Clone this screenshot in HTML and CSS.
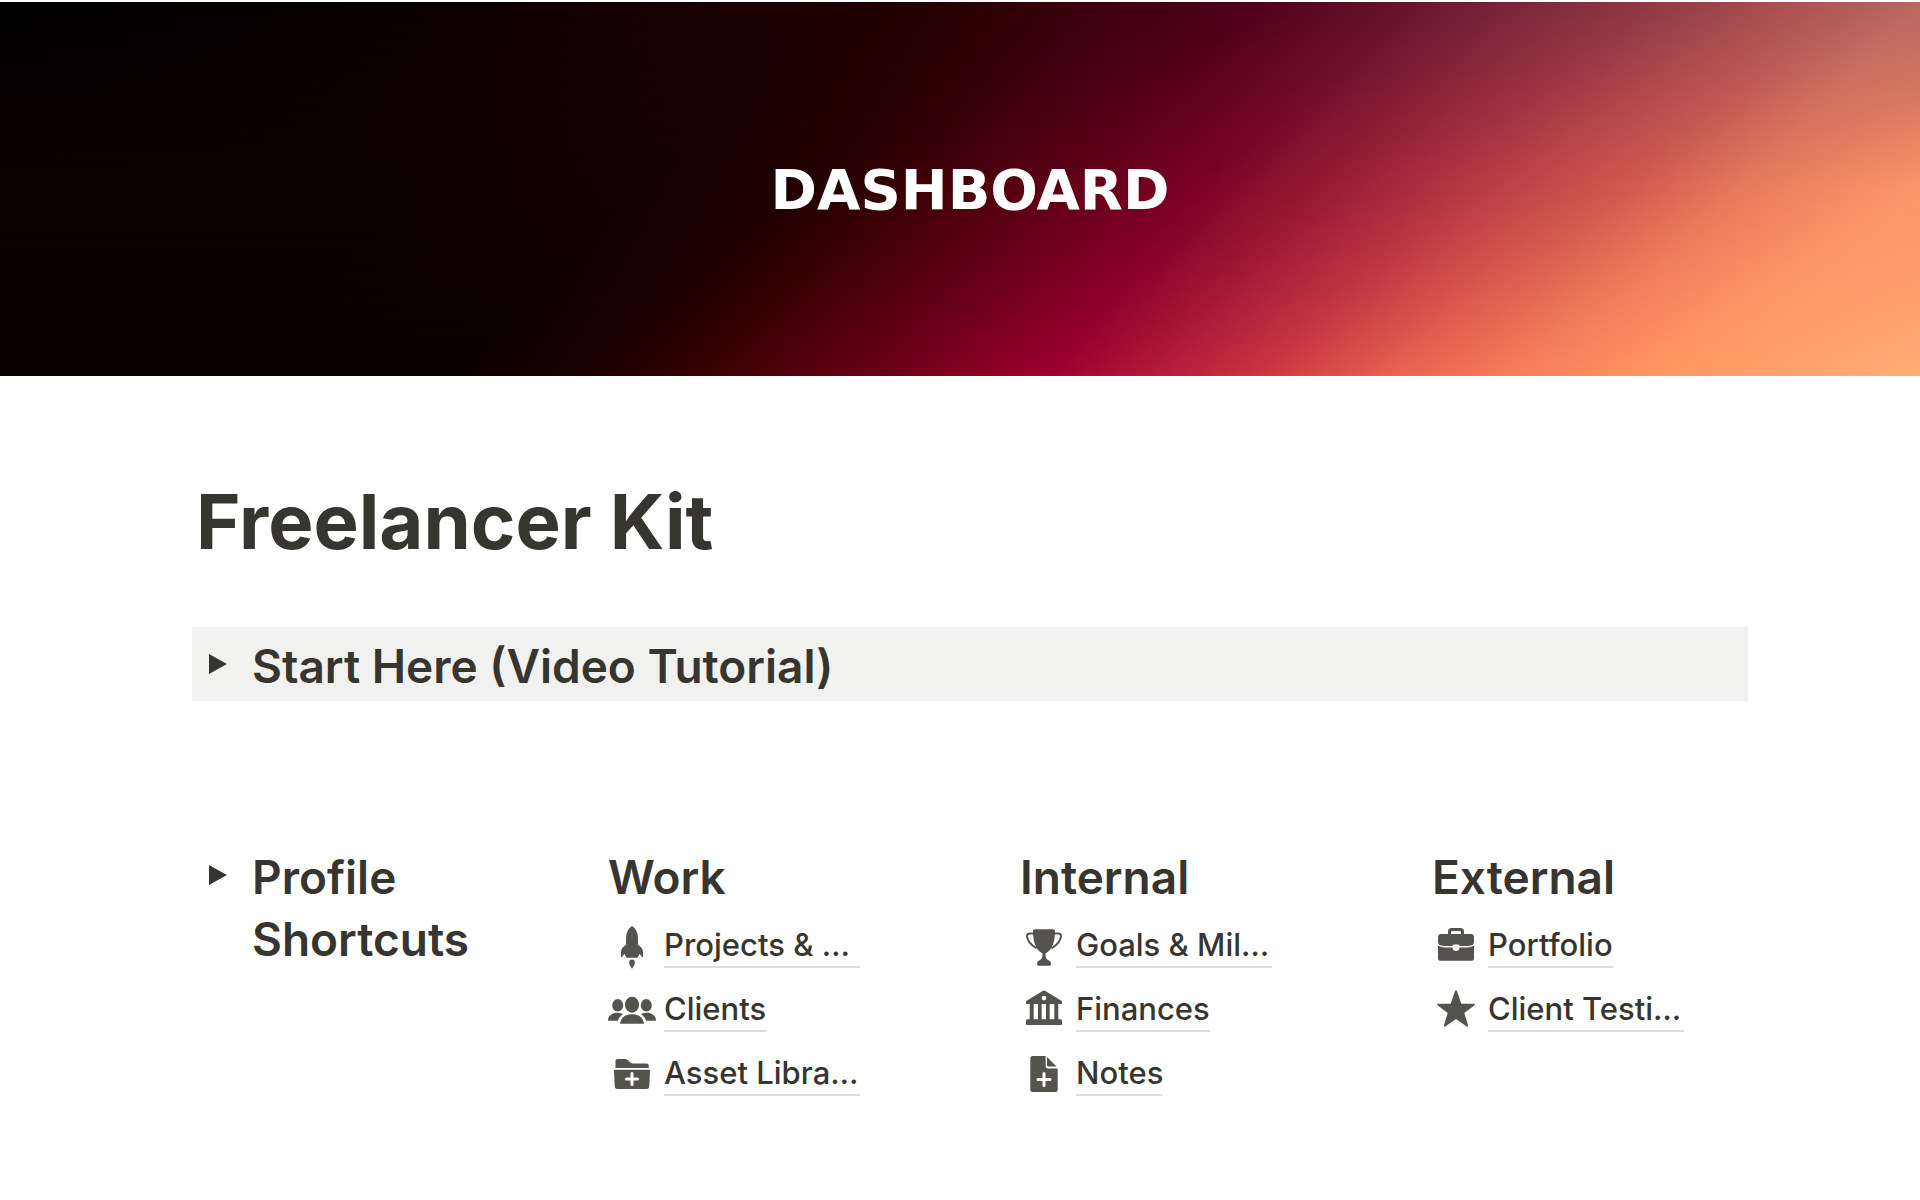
FILE: index.html
```html
<!DOCTYPE html>
<html lang="en">
<head>
  <meta charset="utf-8">
  <title>Freelancer Kit</title>
  <link rel="stylesheet" href="styles.css">
</head>

<body>
  <header class="cover">
    <div class="cover-title">DASHBOARD</div>
  </header>

  <main class="page">
    <h1>Freelancer Kit</h1>

    <section class="toggle callout">
      <button class="arrow" type="button" aria-label="Open Start Here">
        <svg width="18" height="20" viewBox="0 0 18 20"><path d="M0 0v20l18-10z"/></svg>
      </button>
      <h2>Start Here (Video Tutorial)</h2>
    </section>

    <div class="columns">
      <section class="toggle">
        <button class="arrow" type="button" aria-label="Open Profile Shortcuts">
          <svg width="18" height="20" viewBox="0 0 18 20"><path d="M0 0v20l18-10z"/></svg>
        </button>
        <h2>Profile Shortcuts</h2>
      </section>

      <section class="links">
        <h2>Work</h2>
        <a href="#projects">
          <svg class="icon" viewBox="0 0 48 48">
            <path d="M24 4c4 2.500 6 7 6 13v6c3 1.500 5 4 5 7v5.700L31.500 32l-2 3.700h-11l-2-3.700-3.500 3.700V30c0-3 2-5.500 5-7v-6c0-6 2-10.500 6-13z"/>
            <path d="M22 37.700h4c2 3 0 6-2 9-2-3-4-6-2-9z"/>
          </svg>
          <span class="name cut">Projects &amp; …</span>
        </a>
        <a href="#clients">
          <svg class="icon" viewBox="0 0 48 48">
            <ellipse cx="24" cy="18.700" rx="7" ry="8"/>
            <ellipse cx="9.700" cy="19.300" rx="5.500" ry="6.200"/>
            <ellipse cx="38.300" cy="19.300" rx="5.500" ry="6.200"/>
            <path d="M12 37.700c1-6 5-9.400 12-9.400s11 3.400 12 9.400z"/>
            <path d="M0 34.700c0-5 4-8 9.500-8 2 0 4 .5 5.500 1.500-2.500 1.500-4 3.500-5 6.500z"/>
            <path d="M48 34.700c0-5-4-8-9.500-8-2 0-4 .5-5.500 1.500 2.500 1.500 4 3.500 5 6.500z"/>
          </svg>
          <span class="name">Clients</span>
        </a>
        <a href="#assets">
          <svg class="icon" viewBox="0 0 48 48">
            <path d="M7.500 18v-7q0-2 2-2H17q2 0 3.500 1.800l1 1q1.500 1.700 3.500 1.700h14q1.700 0 1.700 2V18z"/>
            <path d="M6.800 19.700h34.400q1 0 .9 1l-.9 16q-.2 2.300-2.500 2.300H9.300Q7 39 6.800 36.700l-.9-16q0-1 .9-1z"/>
            <path class="plus" d="M24 23.500v11M18.500 29h11"/>
          </svg>
          <span class="name cut">Asset Libra…</span>
        </a>
      </section>

      <section class="links">
        <h2>Internal</h2>
        <a href="#goals">
          <svg class="icon" viewBox="0 0 48 48">
            <path class="handle" d="M14 11.500H9.500Q7 11.500 7 14c0 5 3.500 8.500 9.500 12.500M34 11.500h4.500q2.500 0 2.500 2.500c0 5-3.500 8.500-9.500 12.500"/>
            <path d="M14.500 7.300h19q1.500 0 1.500 1.500C35 21 32 28 25.500 31.500c0 4 .5 5 2.500 6.500 2 .8 3 2 3 4.200q0 1.500-1.500 1.500h-11q-1.500 0-1.500-1.500c0-2.200 1-3.400 3-4.200 2-1.500 2.500-2.500 2.500-6.500C16 28 13 21 13 8.800q0-1.500 1.500-1.500z"/>
          </svg>
          <span class="name cut">Goals &amp; Mil…</span>
        </a>
        <a href="#finances">
          <svg class="icon" viewBox="0 0 48 48">
            <path fill-rule="evenodd" d="M23 4.700q1-.6 2 0l16.300 10q.7.500.7 1.300v1q0 1-1 1h-2.700v15.300H41q1 .2 1 1.700v3q0 1-1 1H7q-1 0-1-1v-3q0-1.500 1-1.700h2.700V18H7q-1 0-1-1v-1q0-.8.7-1.300zM24 9.800a2.300 2.300 0 1 0 0 4.600 2.300 2.300 0 0 0 0-4.600zM13.700 18v15.300H18V18zm8 0v15.300H26V18zm8 0v15.300h4.600V18z"/>
          </svg>
          <span class="name">Finances</span>
        </a>
        <a href="#notes">
          <svg class="icon" viewBox="0 0 48 48">
            <path d="M12.800 6h12.900v10q0 2.500 2.500 2.500h9.500v21q0 2.500-2.500 2.500H12.800q-2.500 0-2.500-2.500v-31Q10.300 6 12.800 6z"/>
            <path d="M27 7l9.500 9.500h-8Q27 16.500 27 15z"/>
            <path class="plus" d="M24 23.500v12M18 29.500h12"/>
          </svg>
          <span class="name">Notes</span>
        </a>
      </section>

      <section class="links">
        <h2>External</h2>
        <a href="#portfolio">
          <svg class="icon" viewBox="0 0 48 48">
            <path fill-rule="evenodd" d="M16 12V9.500Q16 6 19.500 6h9Q32 6 32 9.500V12h7q3 0 3 3v5q0 4-7 4H27.500q0-1.500-1.500-1.500h-4q-1.500 0-1.500 1.500H13q-7 0-7-4v-5q0-3 3-3zm3 0h10v-2q0-1-1-1h-8q-1 0-1 1z"/>
            <path d="M6 23.500q3 2 7 2h7.500q.2 3.500 3.500 3.500t3.500-3.500H35q4 0 7-2v12.700q0 2.500-2.500 2.500h-31Q6 38.700 6 36.200z"/>
          </svg>
          <span class="name">Portfolio</span>
        </a>
        <a href="#testimonials">
          <svg class="icon" viewBox="0 0 48 48">
            <path d="M23 5q1-1.500 2 0l4.300 12.700H42q1.500.3.500 1.600L32.300 27l3.800 12.500q.1 1.500-1.400 1L24 33l-10.700 7.500q-1.500.5-1.400-1L15.700 27 5.500 19.300q-1-1.300.5-1.600h12.700z"/>
          </svg>
          <span class="name cut">Client Testi…</span>
        </a>
      </section>
    </div>
  </main>
</body>
</html>
```
FILE: styles.css
```css
body {
  margin: 0;
  padding-top: 2px;
  background: #fff;
  color: #37352f;
  font-family: Inter, "Liberation Sans", sans-serif;
}

h1, h2 { margin: 0; }
h1 { padding-left: 4px; font-size: 76px; line-height: 96px; font-weight: 700; }
h2 { font-size: 46px; line-height: 62px; font-weight: 600; }

/* three slanted gradients (top, middle, bottom), faded into each other */
.cover {
  position: relative;
  display: flex;
  align-items: center;
  justify-content: center;
  height: 374px;
  padding: 0 172px 0 192px;
  background: linear-gradient(135deg, #000 0, #0a0000 17%, #180000 30%,
    #200000 38%, #300003 44%, #400010 49%, #4d001a 54%, #580822 57%,
    #64142c 61%, #78283a 66%, #8e3a45 72%, #a85252 78%, #ba6a62 84%);
}
.cover::before,
.cover::after {
  content: "";
  position: absolute;
  inset: 0;
}
.cover::before {
  background: linear-gradient(135deg, #0d0000 8%, #0d0000 26%, #140000 36%,
    #230000 43%, #350004 47%, #55000f 52%, #68001a 56%, #7c0024 60%,
    #88102c 63%, #981b32 66%, #a82a3c 69%, #bf4346 74%, #d05a4e 79%,
    #e67a5c 84%, #f68d64 89%, #fc9669 92%);
  mask-image: linear-gradient(transparent, #000 50%);
}
.cover::after {
  background: linear-gradient(135deg, #0a0000 16%, #0a0000 36%, #180000 41%,
    #330000 46%, #4f000c 50%, #6c0018 55%, #84001f 58%, #9c002e 62%,
    #b01838 66%, #c93440 71%, #d94c48 74%, #e86250 77%, #f67d5a 82%,
    #ff9562 88%, #ffa26c 94%, #ffae75 100%);
  mask-image: linear-gradient(transparent 50%, #000);
}
.cover-title {
  position: relative;
  z-index: 1;
  color: #fff;
  font: bold 56px "DejaVu Sans", sans-serif;
}

.page { padding: 97px 172px 0 192px; }

.toggle { display: flex; align-items: flex-start; gap: 12px; padding-left: 4px; }
.callout { margin-top: 58px; padding: 8px 4px 4px; background: #f1f1ef; }
.arrow {
  display: flex;
  flex: none;
  align-items: center;
  justify-content: center;
  width: 44px;
  height: 58px;
  padding: 0;
  border: 0;
  background: none;
  cursor: pointer;
}
.arrow svg { fill: #37352f; }

.columns {
  display: grid;
  grid-template-columns: repeat(4, 1fr);
  gap: 92px;
  margin-top: 145px;
}
.links { padding-left: 4px; }
.links h2 { margin-bottom: 6px; }
.links a {
  display: flex;
  align-items: center;
  gap: 8px;
  height: 64px;
  color: inherit;
  text-decoration: none;
}
.icon { flex: none; width: 48px; height: 48px; fill: #55534e; }
.plus { fill: none; stroke: #fff; stroke-width: 3; stroke-linecap: round; }
.handle { fill: none; stroke: #55534e; stroke-width: 2; }
.name {
  border-bottom: 2px solid #ddd;
  font-size: 31px;
  line-height: 42px;
  font-weight: 500;
  white-space: nowrap;
}
.cut { min-width: 196px; }
```
